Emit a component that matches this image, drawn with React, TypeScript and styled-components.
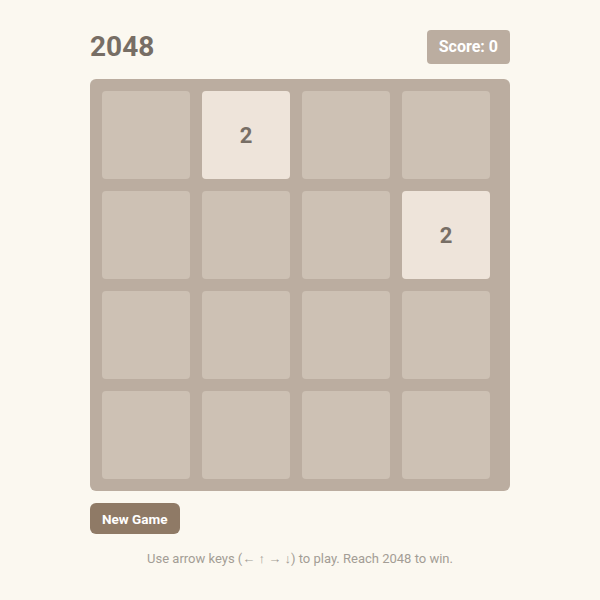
import React, { useState } from 'react';
import styled, { createGlobalStyle } from 'styled-components';

// Starting board, 0 means empty
const startBoard: number[][] = [
  [0, 2, 0, 0],
  [0, 0, 0, 2],
  [0, 0, 0, 0],
  [0, 0, 0, 0],
];

const GlobalStyle = createGlobalStyle`
  html, body {
    margin: 0;
    padding: 0;
    background: #fbf8f0;
    font-family: Roboto, "Liberation Sans", Arial, sans-serif;
  }
`;

const App: React.FC = () => {
  const [board, setBoard] = useState<number[][]>(startBoard);
  const [score, setScore] = useState(0);

  const newGame = () => {
    setBoard(startBoard);
    setScore(0);
  };

  return (
    <>
      <GlobalStyle />
      <Wrapper>
        <Header>
          <Title>2048</Title>
          <ScoreBox>Score: {score}</ScoreBox>
        </Header>
        <Board>
          {board.flat().map((value, i) => (
            <Tile key={i} $filled={value > 0}>
              {value > 0 ? value : ''}
            </Tile>
          ))}
        </Board>
        <NewGameButton onClick={newGame}>New Game</NewGameButton>
        <Hint>Use arrow keys (← ↑ → ↓) to play. Reach 2048 to win.</Hint>
      </Wrapper>
    </>
  );
};

export default App;

const Wrapper = styled.div`
  width: 420px;
  margin: 0 auto;
  padding-top: 30px;
  display: flex;
  flex-direction: column;
`;

const Header = styled.div`
  display: flex;
  justify-content: space-between;
  align-items: center;
  margin-bottom: 15px;
`;

const Title = styled.h1`
  margin: 0;
  font-size: 28px;
  font-weight: 700;
  color: #776e65;
  line-height: 34px;
`;

const ScoreBox = styled.div`
  background: #bbada0;
  color: #ffffff;
  font-size: 16px;
  font-weight: 700;
  line-height: 18px;
  padding: 8px 12px;
  border-radius: 4px;
`;

const Board = styled.div`
  background: #bbada0;
  border-radius: 6px;
  padding: 12px;
  display: grid;
  grid-template-columns: repeat(4, 88px);
  grid-auto-rows: 88px;
  gap: 12px;
`;

const Tile = styled.div<{ $filled: boolean }>`
  background: ${(p) => (p.$filled ? '#eee4da' : '#cdc1b4')};
  border-radius: 4px;
  display: flex;
  align-items: center;
  justify-content: center;
  font-size: 22px;
  font-weight: 700;
  color: #776e65;
`;

const NewGameButton = styled.button`
  align-self: flex-start;
  margin-top: 12px;
  height: 31px;
  padding: 0 12px;
  border: 0;
  border-radius: 6px;
  background: #8f7a66;
  color: #ffffff;
  font-family: inherit;
  font-size: 13.5px;
  font-weight: 700;
  cursor: pointer;
`;

const Hint = styled.p`
  margin: 17px 0 0;
  text-align: center;
  font-size: 13px;
  line-height: 16px;
  color: #a39d95;
`;
